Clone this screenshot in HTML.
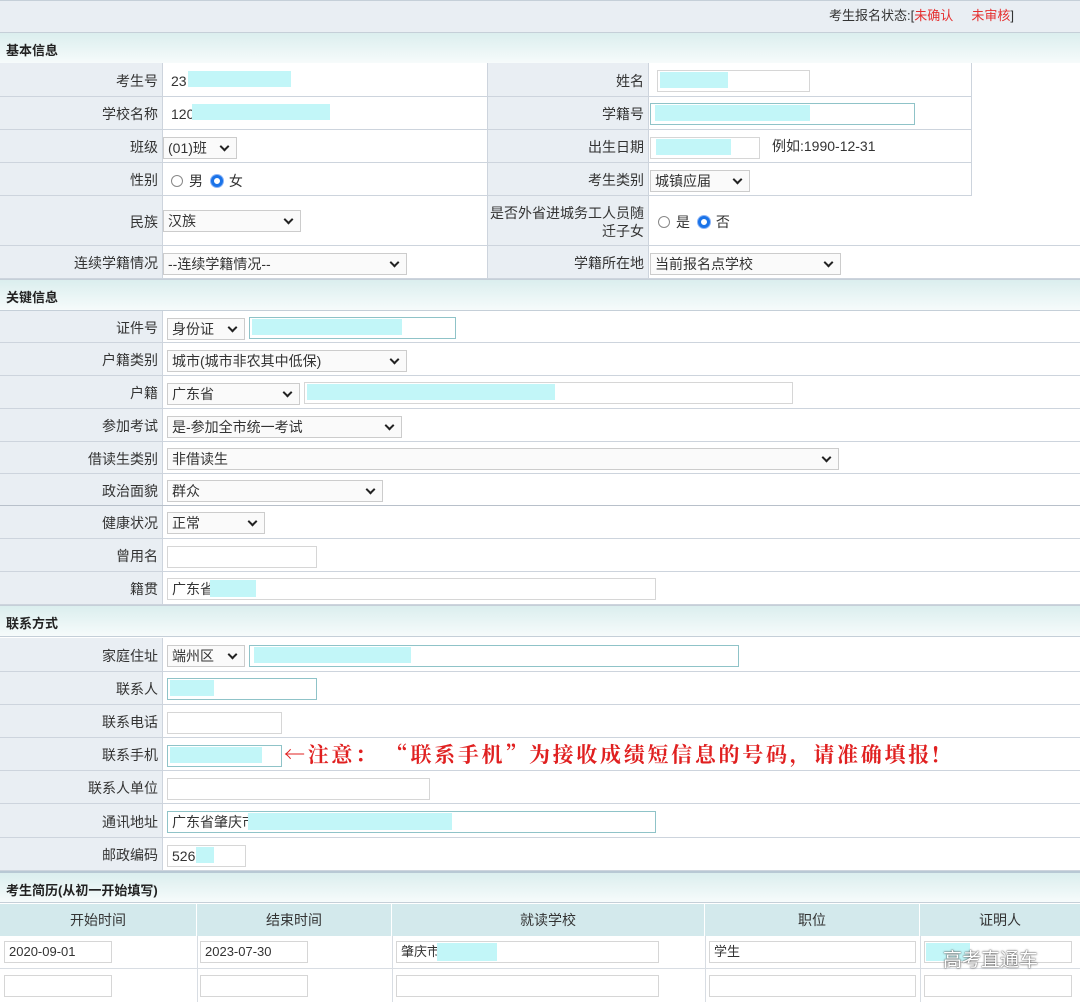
<!DOCTYPE html>
<html><head><meta charset="utf-8">
<style>
*{box-sizing:border-box;margin:0;padding:0}
body{width:1080px;height:1002px;overflow:hidden;background:#fff;font-family:"Liberation Sans","Noto Sans CJK SC",sans-serif;font-size:14px;color:#333;position:relative}
.a{position:absolute}
.r{position:absolute;left:0;width:1080px;border-bottom:1px solid #cdd4dd;background:#fff}
.l{position:absolute;left:0;top:0;bottom:0;width:163px;background:#e9eef3;border-right:1px solid #cdd4dd;display:flex;align-items:center;justify-content:flex-end;padding-right:4px;padding-top:2px;text-align:right;line-height:18px}
.l2{left:487px;width:162px;border-left:1px solid #cdd4dd}
.sec{position:absolute;left:0;width:1080px;height:32px;background:linear-gradient(#dbeeee,#f6fbfb);border-bottom:1px solid #c5cfd8;border-top:1px solid #c5cfd8;font-weight:bold;font-size:13px;padding:7px 0 0 6px;color:#222}
.i{position:absolute;border:1px solid #d6d6d6;background:#fff;height:22px;font-size:14px;line-height:20px;padding-left:4px;white-space:nowrap;overflow:hidden}
.ib{border-color:#8fc3c8}
.s{position:absolute;border:1px solid #ccc;background:#fafafa;height:22px;line-height:20px;padding-left:4px;font-size:14px;white-space:nowrap}
.s:after{content:"";position:absolute;right:8px;top:5px;width:5px;height:5px;border-right:2px solid #222;border-bottom:2px solid #222;transform:rotate(45deg)}
.c{position:absolute;background:#c2f6f8}
.t{position:absolute;font-size:14px;line-height:20px;white-space:nowrap}
.rad{display:inline-block;width:12px;height:12px;border-radius:50%;border:1px solid #888;vertical-align:-1px;margin-right:6px}
.on{border:3px solid #1a73e8;background:#fff;box-shadow:0 0 0 1px #8ab4f8}
.th{position:absolute;top:904px;height:32px;background:#d3e9ec;border-right:1px solid #fff;text-align:center;line-height:32px;font-size:14px}
</style></head><body>
<div class="a" style="left:0;top:0;width:1080px;height:32px;background:#e9eef3;border-top:1px solid #c5cfd8"></div>
<div class="t" style="left:829px;top:6px;font-size:13px">考生报名状态:[<span style="color:#e53030">未确认</span>&nbsp;&nbsp;&nbsp;&nbsp;&nbsp;<span style="color:#e53030">未审核</span>]</div>
<div class="sec" style="top:32px">基本信息</div>

<div class="r" style="top:63px;height:34px"><div class="l">考生号</div><div class="l l2">姓名</div></div>
<div class="r" style="top:97px;height:33px"><div class="l">学校名称</div><div class="l l2">学籍号</div></div>
<div class="r" style="top:130px;height:33px"><div class="l">班级</div><div class="l l2">出生日期</div></div>
<div class="r" style="top:163px;height:33px"><div class="l">性别</div><div class="l l2">考生类别</div></div>
<div class="r" style="top:196px;height:50px"><div class="l">民族</div><div class="l l2" style="padding-left:2px">是否外省进城务工人员随<br>迁子女</div></div>
<div class="r" style="top:246px;height:33px"><div class="l">连续学籍情况</div><div class="l l2">学籍所在地</div></div>
<div class="a" style="left:971px;top:63px;width:109px;height:133px;background:#fff;border-left:1px solid #cdd4dd"></div>

<div class="t" style="left:171px;top:71px">23</div><div class="c" style="left:188px;top:71px;width:103px;height:16px"></div>
<div class="t" style="left:171px;top:104px">120</div><div class="c" style="left:192px;top:104px;width:138px;height:16px"></div>
<div class="s" style="left:163px;top:137px;width:74px">(01)班</div>
<div class="t" style="left:171px;top:171px"><span class="rad"></span>男 <span class="rad on" style="margin-left:4px"></span>女</div>
<div class="s" style="left:163px;top:210px;width:138px">汉族</div>
<div class="s" style="left:163px;top:253px;width:244px">--连续学籍情况--</div>

<div class="i" style="left:657px;top:70px;width:153px"></div><div class="c" style="left:660px;top:72px;width:68px;height:16px"></div>
<div class="i ib" style="left:650px;top:103px;width:265px"></div><div class="c" style="left:655px;top:105px;width:155px;height:16px"></div>
<div class="i" style="left:650px;top:137px;width:110px"></div><div class="c" style="left:656px;top:139px;width:75px;height:16px"></div>
<div class="t" style="left:772px;top:136px">例如:1990-12-31</div>
<div class="s" style="left:650px;top:170px;width:100px">城镇应届</div>
<div class="t" style="left:658px;top:212px"><span class="rad"></span>是 <span class="rad on" style="margin-left:4px"></span>否</div>
<div class="s" style="left:650px;top:253px;width:191px">当前报名点学校</div>

<div class="sec" style="top:279px">关键信息</div>
<div class="r" style="top:311px;height:32px"><div class="l">证件号</div></div>
<div class="r" style="top:343px;height:33px"><div class="l">户籍类别</div></div>
<div class="r" style="top:376px;height:33px"><div class="l">户籍</div></div>
<div class="r" style="top:409px;height:33px"><div class="l">参加考试</div></div>
<div class="r" style="top:442px;height:32px"><div class="l">借读生类别</div></div>
<div class="r" style="top:474px;height:32px;border-bottom-color:#b8c0ca"><div class="l">政治面貌</div></div>
<div class="r" style="top:506px;height:33px"><div class="l">健康状况</div></div>
<div class="r" style="top:539px;height:33px"><div class="l">曾用名</div></div>
<div class="r" style="top:572px;height:33px"><div class="l">籍贯</div></div>

<div class="s" style="left:167px;top:318px;width:78px">身份证</div>
<div class="i ib" style="left:249px;top:317px;width:207px"></div><div class="c" style="left:252px;top:319px;width:150px;height:16px"></div>
<div class="s" style="left:167px;top:350px;width:240px">城市(城市非农其中低保)</div>
<div class="s" style="left:167px;top:383px;width:133px">广东省</div>
<div class="i" style="left:304px;top:382px;width:489px"></div><div class="c" style="left:307px;top:384px;width:248px;height:16px"></div>
<div class="s" style="left:167px;top:416px;width:235px">是-参加全市统一考试</div>
<div class="s" style="left:167px;top:448px;width:672px">非借读生</div>
<div class="s" style="left:167px;top:480px;width:216px">群众</div>
<div class="s" style="left:167px;top:512px;width:98px">正常</div>
<div class="i" style="left:167px;top:546px;width:150px"></div>
<div class="i" style="left:167px;top:578px;width:489px">广东省</div><div class="c" style="left:210px;top:580px;width:46px;height:17px"></div>

<div class="sec" style="top:605px">联系方式</div>
<div class="r" style="top:638px;height:34px"><div class="l">家庭住址</div></div>
<div class="r" style="top:672px;height:33px"><div class="l">联系人</div></div>
<div class="r" style="top:705px;height:33px"><div class="l">联系电话</div></div>
<div class="r" style="top:738px;height:33px"><div class="l">联系手机</div></div>
<div class="r" style="top:771px;height:33px"><div class="l">联系人单位</div></div>
<div class="r" style="top:804px;height:34px"><div class="l">通讯地址</div></div>
<div class="r" style="top:838px;height:33px"><div class="l">邮政编码</div></div>

<div class="s" style="left:167px;top:645px;width:78px">端州区</div>
<div class="i ib" style="left:249px;top:645px;width:490px"></div><div class="c" style="left:254px;top:647px;width:157px;height:16px"></div>
<div class="i ib" style="left:167px;top:678px;width:150px"></div><div class="c" style="left:170px;top:680px;width:44px;height:16px"></div>
<div class="i" style="left:167px;top:712px;width:115px"></div>
<div class="i ib" style="left:167px;top:745px;width:115px"></div><div class="c" style="left:170px;top:747px;width:92px;height:16px"></div>
<div class="t" style="left:284px;top:741px;color:#e02020;font-family:'Noto Serif CJK SC',serif;font-size:21px;font-weight:bold;line-height:26px;letter-spacing:2.7px">←注意：&nbsp;“联系手机”为接收成绩短信息的号码，请准确填报!</div>
<div class="i" style="left:167px;top:778px;width:263px"></div>
<div class="i ib" style="left:167px;top:811px;width:489px">广东省肇庆市</div><div class="c" style="left:248px;top:813px;width:204px;height:17px"></div>
<div class="i" style="left:167px;top:845px;width:79px">526</div><div class="c" style="left:196px;top:847px;width:18px;height:16px"></div>

<div class="sec" style="top:871px;border-top:2px solid #b8c8d4">考生简历(从初一开始填写)</div>
<div class="th" style="left:0;width:197px">开始时间</div>
<div class="th" style="left:197px;width:195px">结束时间</div>
<div class="th" style="left:392px;width:313px">就读学校</div>
<div class="th" style="left:705px;width:215px">职位</div>
<div class="th" style="left:920px;width:160px;border-right:0">证明人</div>
<div class="a" style="left:0;top:968px;width:1080px;height:1px;background:#d8dde3"></div>
<div class="a" style="left:197px;top:936px;width:1px;height:66px;background:#d8dde3"></div>
<div class="a" style="left:392px;top:936px;width:1px;height:66px;background:#d8dde3"></div>
<div class="a" style="left:705px;top:936px;width:1px;height:66px;background:#d8dde3"></div>
<div class="a" style="left:920px;top:936px;width:1px;height:66px;background:#d8dde3"></div>
<div class="i" style="left:4px;top:941px;width:108px;font-size:13px">2020-09-01</div>
<div class="i" style="left:200px;top:941px;width:108px;font-size:13px">2023-07-30</div>
<div class="i" style="left:396px;top:941px;width:263px;font-size:13px">肇庆市</div><div class="c" style="left:437px;top:943px;width:60px;height:18px"></div>
<div class="i" style="left:709px;top:941px;width:207px;font-size:13px">学生</div>
<div class="i" style="left:924px;top:941px;width:148px"></div><div class="c" style="left:926px;top:943px;width:44px;height:18px"></div>
<div class="i" style="left:4px;top:975px;width:108px"></div>
<div class="i" style="left:200px;top:975px;width:108px"></div>
<div class="i" style="left:396px;top:975px;width:263px"></div>
<div class="i" style="left:709px;top:975px;width:207px"></div>
<div class="i" style="left:924px;top:975px;width:148px"></div>
<div class="t" style="left:943px;top:951px;font-size:19px;color:#fff;text-shadow:0 0 2px #555,0 0 1px #333">高考直通车</div>
</body></html>
